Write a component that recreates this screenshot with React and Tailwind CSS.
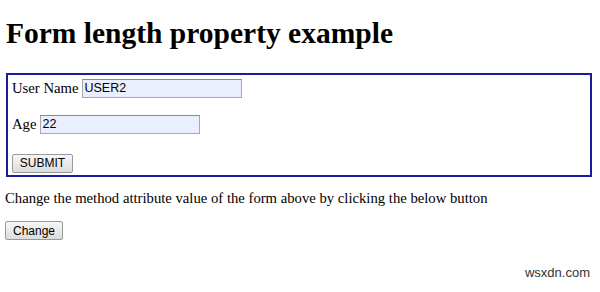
export default function App() {
  return (
    <div className="relative h-[292px] w-[600px] overflow-hidden bg-white px-[5px] text-black font-['Liberation_Serif',serif] text-[14.7px]">
      <h1 className="mt-[16px] pl-px text-[29.5px] font-bold leading-[34px]">Form length property example</h1>

      {/* form box */}
      <form className="mt-[23px] ml-px w-[586px] border-2 border-[#1c1c9c] px-1 pt-[3px] pb-[2px]">
        <div className="flex h-5 items-center">
          <span className="mr-[4px]">User Name</span>
          <input
            type="text"
            defaultValue="USER2"
            className="h-[19px] w-[160px] border border-[#a8a8a8] border-t-[#8a8a8a] bg-[#e9effd] px-px font-['Liberation_Sans',sans-serif] text-[12.5px] outline-none"
          />
        </div>
        <div className="mt-4 flex h-5 items-center">
          <span className="mr-[4px]">Age</span>
          <input
            type="text"
            defaultValue="22"
            className="h-[19px] w-[160px] border border-[#a8a8a8] border-t-[#8a8a8a] bg-[#e9effd] px-px font-['Liberation_Sans',sans-serif] text-[12.5px] outline-none"
          />
        </div>
        <div className="mt-[17px]">
          <button
            type="button"
            className="h-[19px] w-[61px] rounded-[2px] border border-[#9a9a9a] bg-gradient-to-b from-[#f7f7f7] to-[#dddddd] font-['Liberation_Sans',sans-serif] text-[12px] leading-none"
          >
            SUBMIT
          </button>
        </div>
      </form>

      <p className="mt-[12px] leading-[18px]">Change the method attribute value of the form above by clicking the below button</p>

      <button
        type="button"
        className="mt-[14px] h-[19px] w-[58px] rounded-[2px] border border-[#9a9a9a] bg-gradient-to-b from-[#f7f7f7] to-[#dddddd] font-['Liberation_Sans',sans-serif] text-[12px] leading-none"
      >
        Change
      </button>

      {/* watermark */}
      <div className="absolute right-[10px] bottom-[13px] font-['Liberation_Sans',sans-serif] text-[13px] leading-none text-[#333]">wsxdn.com</div>
    </div>
  )
}
